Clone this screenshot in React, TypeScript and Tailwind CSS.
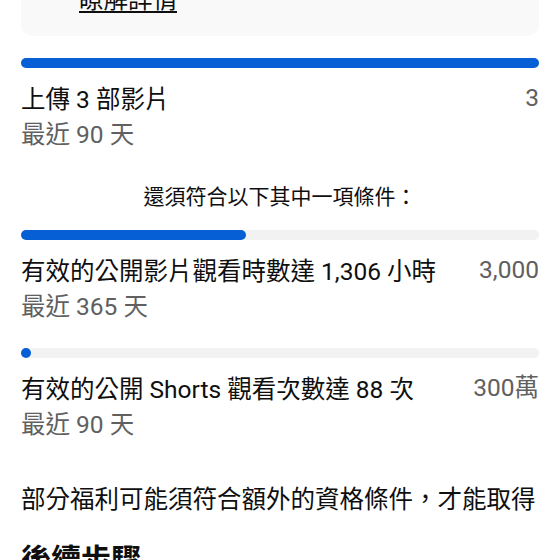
const requirements = [
  {
    title: "有效的公開影片觀看時數達 1,306 小時",
    period: "最近 365 天",
    target: "3,000",
    percent: 43.5,
  },
  {
    title: "有效的公開 Shorts 觀看次數達 88 次",
    period: "最近 90 天",
    target: "300萬",
    percent: 0,
  },
];

function ProgressBar({ percent }: { percent: number }) {
  return (
    <div className="h-[10px] w-full rounded-full bg-[#f2f2f2]">
      <div
        className="h-full min-w-[10px] rounded-full bg-[#065fd4]"
        style={{ width: `${percent}%` }}
      />
    </div>
  );
}

function Requirement({
  title,
  period,
  target,
  percent,
}: {
  title: string;
  period: string;
  target: string;
  percent: number;
}) {
  return (
    <div>
      <ProgressBar percent={percent} />
      <div className="mt-[14px] flex items-start justify-between gap-4 text-[24.5px] leading-[35px]">
        <span className="text-[#0f0f0f]">{title}</span>
        <span className="-mt-[2px] shrink-0 text-[#606060]">{target}</span>
      </div>
      <p className="text-[24.5px] leading-[35px] text-[#606060]">{period}</p>
    </div>
  );
}

export default function App() {
  return (
    <div
      className="h-[560px] w-[560px] overflow-hidden bg-white px-[21px]"
      style={{ fontFamily: "Roboto, 'Noto Sans CJK TC', sans-serif" }}
    >
      <div className="-mt-[32px] rounded-xl bg-[#f9f9f9] pb-5 pl-[58px] pt-4">
        <a
          href="#"
          className="text-[24.5px] leading-[32px] text-[#0f0f0f] underline underline-offset-[3px]"
        >
          瞭解詳情
        </a>
      </div>

      <div className="mt-[22px]">
        <Requirement
          title="上傳 3 部影片"
          period="最近 90 天"
          target="3"
          percent={100}
        />
      </div>

      <p className="mt-[31px] text-center text-[21px] leading-[28px] text-[#0f0f0f]">
        還須符合以下其中一項條件：
      </p>

      <div className="mt-[19px] flex flex-col gap-[24px]">
        {requirements.map((r) => (
          <Requirement key={r.title} {...r} />
        ))}
      </div>

      <p className="mt-[40px] whitespace-nowrap text-[24.5px] leading-[35px] text-[#0f0f0f]">
        部分福利可能須符合額外的資格條件，才能取得
      </p>

      <h2 className="mt-[23px] text-[30px] font-bold leading-[40px] text-[#0f0f0f]">
        後續步驟
      </h2>
    </div>
  );
}
